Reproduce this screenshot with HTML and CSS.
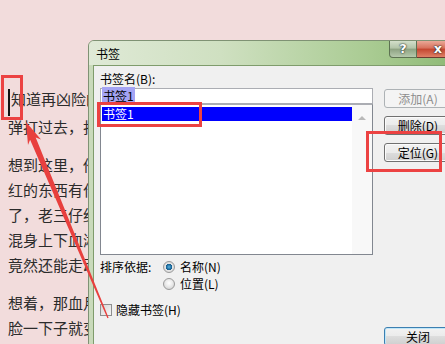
FILE: index.html
```html
<!DOCTYPE html>
<html lang="zh-CN">
<head>
    <meta charset="UTF-8">
    <meta name="viewport" content="width=device-width, initial-scale=1.0">
    <title>书签</title>
    <link rel="stylesheet" href="styles.css">
</head>
<body>
    <div class="doc">
        <p><span class="caret"></span>知道再凶险的地方他也要去闯一闯，</p>
        <p>弹打过去，打得那东西直往后退。</p>
    </div>
    <div class="doc doc-rest">
        <p>想到这里，他便不再犹豫，那团</p>
        <p>红的东西有什么可怕的，他冲上去</p>
        <p>了，老三仔细一看，那东西浑身是血，</p>
        <p>混身上下血淋淋的，可是它</p>
        <p>竟然还能走动，一步一步往前挪。</p>
    </div>
    <div class="doc doc-rest">
        <p>想着，那血月越来越亮，老三的</p>
        <p>脸一下子就变得煞白。</p>
    </div>

    <div class="dialog">
        <div class="titlebar">
            <span class="title">书签</span>
            <div class="caption-btns">
                <span class="cap cap-help">?</span>
                <span class="cap cap-close">x</span>
            </div>
        </div>
        <div class="client">
            <div class="left-col">
                <div class="lbl">书签名(B):</div>
                <div class="edit"><span class="sel">书签1</span></div>
                <div class="listbox">
                    <div class="items">
                        <div class="item active">书签1</div>
                    </div>
                    <div class="scroll"><span class="scroll-up"></span></div>
                </div>
                <div class="sort">
                    <span class="sort-lbl">排序依据:</span>
                    <div class="radios">
                        <div class="radio on"><span class="dot"></span>名称(N)</div>
                        <div class="radio"><span class="dot"></span>位置(L)</div>
                    </div>
                </div>
                <div class="check"><span class="box"></span>隐藏书签(H)</div>
            </div>
            <div class="right-col">
                <button class="btn" disabled>添加(A)</button>
                <button class="btn">删除(D)</button>
                <button class="btn">定位(G)</button>
                <button class="btn btn-default">关闭</button>
            </div>
        </div>
    </div>

    <!-- red annotations on top of the screenshot -->
    <span class="mark mark-caret"></span>
    <span class="mark mark-item"></span>
    <span class="mark mark-goto"></span>
    <svg class="arrow" width="445" height="344" viewBox="0 0 445 344">
        <polygon points="26,122 41,139.6 35.7,137.4 108.6,317.8 107.4,318.2 30.1,139.8 28,145" fill="#e8403e"/>
    </svg>
</body>
</html>
```

FILE: styles.css
```css
body {
    margin: 0;
    width: 445px;
    height: 344px;
    overflow: hidden;
    background-color: #f2dcdc;
    font-family: "Noto Sans CJK SC", sans-serif;
}
.doc {
    padding: 86px 0 0 8px;
    font-size: 15px;
    line-height: 25px;
    color: #2b2b2b;
    white-space: nowrap;
}
.doc p {
    margin: 0;
}
.doc-rest {
    padding-top: 13px;
}
.caret {
    display: inline-block;
    width: 2px;
    height: 27px;
    margin: -2px 1px -2px 0;
    background: #111;
    vertical-align: -9px;
}

/* dialog window */
.dialog {
    position: absolute;
    left: 88px;
    top: 40px;
    width: 378px;
    height: 320px;
    box-sizing: border-box;
    border: 1px solid #7f9274;
    border-radius: 6px 6px 0 0;
    padding: 0 5px 0 4px;
    background: linear-gradient(90deg, #c9dabb 0%, #c3d8b2 60%, #a9c994 100%);
    font-size: 12px;
    line-height: 16px;
    color: #000;
}
.titlebar {
    height: 24px;
    display: flex;
    align-items: flex-start;
    margin: 0 -5px 0 -4px;
    padding: 0 5px 0 4px;
    background: linear-gradient(90deg, #dfe9d6 0%, #cfe0c1 35%, #a9cb92 75%, #8ab772 100%);
    border-radius: 5px 5px 0 0;
}
.title {
    padding: 6px 0 0 3px;
    font-size: 12px;
    line-height: 14px;
}
.caption-btns {
    margin-left: auto;
    display: flex;
}
.cap {
    height: 17px;
    box-sizing: border-box;
    display: flex;
    align-items: center;
    justify-content: center;
    color: #fff;
    font-weight: bold;
    font-family: "DejaVu Sans", sans-serif;
    text-shadow: 0 0 2px #233, 0 0 1px #000;
    border-top: none;
}
.cap-help {
    width: 28px;
    font-size: 13px;
    border: 1px solid #5d7252;
    border-top: none;
    border-radius: 0 0 0 4px;
    background: linear-gradient(#d3dfca, #b2c4a8 45%, #8da282 50%, #b6c9ac);
}
.cap-close {
    width: 43px;
    font-size: 13px;
    border: 1px solid #6d3a30;
    border-top: none;
    border-left: none;
    border-radius: 0 0 4px 0;
    background: linear-gradient(#eaa897, #d7705b 45%, #c3452f 50%, #df8066);
}
.client {
    display: flex;
    gap: 11px;
    height: 100%;
    padding: 0 0 0 6px;
    background: #f0f0f0;
    border-top: 1px solid #7f9c6c;
    border-left: 1px solid #7f9c6c;
}
.left-col {
    width: 273px;
    padding-top: 5px;
}
.lbl {
    height: 16px;
}
.edit {
    margin-top: 1px;
    height: 16px;
    box-sizing: border-box;
    border: 1px solid #abadb3;
    background: #fff;
    padding-left: 1px;
    line-height: 14px;
}
.sel {
    background: #a4a4f4;
    padding: 0 1px;
}
.listbox {
    height: 151px;
    box-sizing: border-box;
    border: 1px solid #828790;
    border-top-color: #abadb3;
    background: #fff;
    display: flex;
}
.items {
    flex: 1;
    padding: 2px 0 0 1px;
}
.item {
    height: 14px;
    line-height: 14px;
    padding-left: 1px;
}
.item.active {
    background: #0000fe;
    color: #fff;
}
.scroll {
    width: 20px;
    background: #f8f8f8;
    display: flex;
    justify-content: center;
    padding-top: 11px;
}
.scroll-up {
    width: 0;
    height: 0;
    border-left: 4px solid transparent;
    border-right: 4px solid transparent;
    border-bottom: 4px solid #b9b9b9;
}
.sort {
    display: flex;
    margin-top: 3px;
}
.sort-lbl {
    width: 63px;
    line-height: 17px;
}
.radio,
.check {
    display: flex;
    align-items: center;
    height: 17px;
}
.dot {
    width: 12px;
    height: 12px;
    box-sizing: border-box;
    margin-right: 5px;
    border-radius: 50%;
    border: 1px solid #9a9a9a;
    background: radial-gradient(circle at 50% 40%, #ffffff 0%, #eaeaea 45%, #c9c9c9 100%);
}
.radio.on .dot {
    background: radial-gradient(circle, #5fb4e0 0%, #1d6fa2 32%, #1a5d8c 42%, #e6e6e6 48%, #cfcfcf 100%);
}
.check {
    margin-top: 9px;
}
.box {
    width: 12px;
    height: 12px;
    box-sizing: border-box;
    margin-right: 4px;
    border: 1px solid #8e8f8f;
    background: linear-gradient(135deg, #d6d6d6, #f6f6f6);
}
.right-col {
    width: 68px;
    padding-top: 23px;
    display: flex;
    flex-direction: column;
    gap: 8px;
}
.btn {
    height: 19px;
    padding: 0;
    border: 1px solid #707070;
    border-radius: 3px;
    background: linear-gradient(#f2f2f2 0%, #ebebeb 50%, #dddddd 50%, #cfcfcf 100%);
    box-shadow: inset 0 0 0 1px #fbfbfb;
    font-family: "Noto Sans CJK SC", sans-serif;
    font-size: 12px;
    line-height: 15px;
    color: #000;
}
.btn:disabled {
    border-color: #adb2b5;
    background: #f4f4f4;
    box-shadow: none;
    color: #8d8d8d;
}
.btn-default {
    margin-top: 157px;
    border-color: #3c7fb1;
    box-shadow: inset 0 0 0 1px #bfe6f8;
}

/* annotations */
.mark {
    position: absolute;
    box-sizing: border-box;
    border: 3px solid #ec4242;
}
.mark-caret {
    left: 1px;
    top: 75px;
    width: 22px;
    height: 45px;
}
.mark-item {
    left: 97px;
    top: 102px;
    width: 105px;
    height: 25px;
}
.mark-goto {
    left: 366px;
    top: 131px;
    width: 76px;
    height: 41px;
}
.arrow {
    position: absolute;
    left: 0;
    top: 0;
    pointer-events: none;
}
```
